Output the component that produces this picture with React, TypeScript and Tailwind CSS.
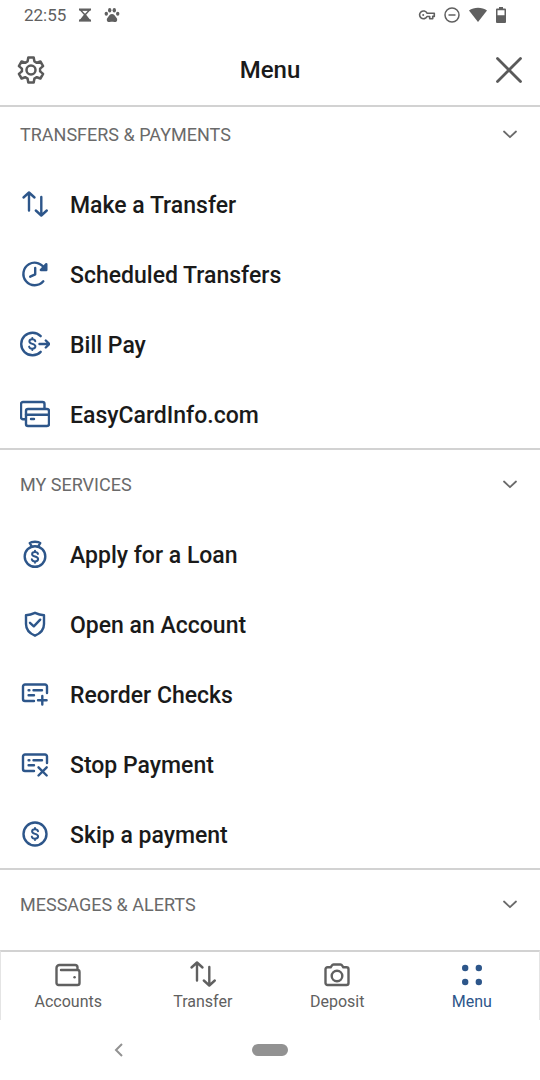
import type { ReactNode } from "react";

type IconName =
  | "transfer"
  | "scheduled"
  | "billpay"
  | "cards"
  | "loan"
  | "shield"
  | "reorder"
  | "stop"
  | "coin"
  | "wallet"
  | "camera"
  | "dots";

const checkSlip = (
  <>
    <path d="M27 13V6.500a2 2 0 0 0-2-2H5a2 2 0 0 0-2 2V19a2 2 0 0 0 2 2h9" />
    <path d="M8.600 10.300h.8M13.500 10.300H22M8.600 15.200H14" />
  </>
);

const glyphs: Record<IconName, ReactNode> = {
  transfer: (
    <>
      <path d="M9 20.500V3M3.500 7.500 9 2.500l5.500 5" />
      <path d="M21.300 7v18M15.800 20.500l5.500 5 5.500-5" />
    </>
  ),
  scheduled: (
    <>
      <path d="M23.300 21.300A11.300 11.300 0 1 1 25.200 9.800" />
      <path d="M20.800 10H26.300V4.200Z" />
      <path d="M15.200 8v6.300L10.200 16.700" />
    </>
  ),
  billpay: (
    <>
      <path d="M20.700 6.200a11.300 11.300 0 1 0 0 15.600" />
      <path d="M19.500 14H29M25.800 10.500 29.300 14l-3.500 3.500" />
      <path d="M15.300 11.200c-.3-1.200-1.400-1.900-3-1.900-1.700 0-2.900.8-2.900 2.200 0 3 6 1.700 6 4.800 0 1.500-1.200 2.400-3.100 2.400-1.700 0-2.900-.8-3.200-2.100M12.300 8v1.300M12.300 18.700V20" strokeWidth="2" />
    </>
  ),
  cards: (
    <>
      <path d="M5.500 19.300H3a2 2 0 0 1-2-2V4a2 2 0 0 1 2-2h19.500a2 2 0 0 1 2 2v4.500" />
      <rect x="6" y="9" width="23" height="17" rx="2" />
      <path d="M6 14.800h23M11 19h3" />
    </>
  ),
  loan: (
    <>
      <circle cx="15" cy="16.500" r="10.300" />
      <path d="M11.500 6 9.700 3C11.500 1.300 18.500 1.300 20.300 3l-1.800 3" />
      <path d="M18 13.900c-.3-1.200-1.400-1.900-3-1.900-1.700 0-2.900.8-2.900 2.200 0 3 6 1.700 6 4.800 0 1.500-1.200 2.400-3.100 2.400-1.700 0-2.900-.8-3.200-2.100M15 10.700V12M15 21.400v1.300" strokeWidth="2" />
    </>
  ),
  shield: (
    <>
      <path d="M15 2.800c2.800 1.300 5.800 2.200 9 2.500V14c0 5-3.500 9.400-9 11.700C9.500 23.400 6 19 6 14V5.300c3.200-.3 6.200-1.200 9-2.500Z" />
      <path d="m10 12.800 3.800 3.500 6.400-6.600" />
    </>
  ),
  reorder: (
    <>
      {checkSlip}
      <path d="M22.300 16v8.600M18 20.300h8.600" />
    </>
  ),
  stop: (
    <>
      {checkSlip}
      <path d="m18.500 17.300 8.200 8.200M26.700 17.300l-8.200 8.200" />
    </>
  ),
  coin: (
    <>
      <circle cx="15" cy="14" r="11.500" />
      <path d="M18 11.200c-.3-1.200-1.400-1.900-3-1.900-1.700 0-2.900.8-2.900 2.200 0 3 6 1.700 6 4.800 0 1.500-1.200 2.400-3.100 2.400-1.700 0-2.900-.8-3.200-2.100M15 8v1.300M15 18.700V20" strokeWidth="2" />
    </>
  ),
  wallet: (
    <>
      <path d="M8 10h16.500a2 2 0 0 1 2 2v11a2 2 0 0 1-2 2H5.500a2 2 0 0 1-2-2V8a3 3 0 0 1 3-3H22a2.500 2.500 0 0 1 2.500 2.500V10" />
      <path d="M21.500 17.300h.1" />
    </>
  ),
  camera: (
    <>
      <path d="M5.500 7.300h3.200l1.300-1.900c.3-.6.800-.9 1.500-.9h7c.7 0 1.200.3 1.500.9l1.300 1.900h3.200a2 2 0 0 1 2 2V23a2 2 0 0 1-2 2h-19a2 2 0 0 1-2-2V9.300a2 2 0 0 1 2-2Z" />
      <circle cx="15" cy="16" r="5.300" />
    </>
  ),
  dots: (
    <g fill="currentColor" stroke="none">
      <circle cx="8.200" cy="8" r="3.200" />
      <circle cx="21.800" cy="8" r="3.200" />
      <circle cx="8.200" cy="22" r="3.200" />
      <circle cx="21.800" cy="22" r="3.200" />
    </g>
  ),
};

function Icon({ name }: { name: IconName }) {
  return (
    <svg
      viewBox="0 0 30 30"
      className="size-[30px] shrink-0"
      fill="none"
      stroke="currentColor"
      strokeWidth="2.400"
      strokeLinecap="round"
      strokeLinejoin="round"
      aria-hidden="true"
    >
      {glyphs[name]}
    </svg>
  );
}

type Item = { label: string; icon: IconName };
type Section = { title: string; items: Item[] };

const sections: Section[] = [
  {
    title: "TRANSFERS & PAYMENTS",
    items: [
      { label: "Make a Transfer", icon: "transfer" },
      { label: "Scheduled Transfers", icon: "scheduled" },
      { label: "Bill Pay", icon: "billpay" },
      { label: "EasyCardInfo.com", icon: "cards" },
    ],
  },
  {
    title: "MY SERVICES",
    items: [
      { label: "Apply for a Loan", icon: "loan" },
      { label: "Open an Account", icon: "shield" },
      { label: "Reorder Checks", icon: "reorder" },
      { label: "Stop Payment", icon: "stop" },
      { label: "Skip a payment", icon: "coin" },
    ],
  },
  { title: "MESSAGES & ALERTS", items: [] },
];

const tabs: Item[] = [
  { label: "Accounts", icon: "wallet" },
  { label: "Transfer", icon: "transfer" },
  { label: "Deposit", icon: "camera" },
  { label: "Menu", icon: "dots" },
];

function StatusBar() {
  return (
    <div className="flex h-[30px] items-center justify-between pr-[34px] pl-6 text-[#606060]">
      <div className="flex items-center gap-3">
        <span className="text-[17px] leading-5">22:55</span>
        <svg viewBox="0 0 14 14" className="size-3.5" fill="none" stroke="currentColor" strokeWidth="1.500" aria-hidden="true">
          <path d="M1 1.500h12M1 12.500h12" strokeWidth="2" />
          <path d="M2.500 2 7 7l4.500-5Z" />
          <path d="M7 6.500 2.300 12.500h9.400Z" fill="currentColor" />
        </svg>
        <svg viewBox="0 0 16 16" className="size-4" fill="currentColor" aria-hidden="true">
          <ellipse cx="2.300" cy="6.800" rx="1.700" ry="2" />
          <ellipse cx="5.700" cy="3.200" rx="1.700" ry="2.300" />
          <ellipse cx="10.300" cy="3.200" rx="1.700" ry="2.300" />
          <ellipse cx="13.700" cy="6.800" rx="1.700" ry="2" />
          <path d="M8 7c2 0 2.800 1.800 4 3.200 1 1.100 1.400 2 1.100 3.200-.4 1.500-1.700 1.900-3 1.600-1.400-.3-2.800-.3-4.200 0-1.300.3-2.600-.1-3-1.600-.3-1.200.1-2.100 1.100-3.200C5.200 8.800 6 7 8 7Z" />
        </svg>
      </div>
      <div className="flex items-center gap-2">
        <svg viewBox="0 0 18 10" className="h-2.5 w-[18px]" fill="none" stroke="currentColor" strokeWidth="1.600" strokeLinejoin="round" aria-hidden="true">
          <path d="M9 3.200h7.300v3.200h-1.600v2.400h-3V6.500H9A3.900 3.900 0 1 1 9 3.200Z" />
          <circle cx="5.200" cy="5" r="1" fill="currentColor" stroke="none" />
        </svg>
        <svg viewBox="0 0 16 16" className="size-4" fill="none" stroke="currentColor" strokeWidth="1.500" aria-hidden="true">
          <circle cx="8" cy="8" r="7" />
          <path d="M4.500 8h7" />
        </svg>
        <svg viewBox="0 0 20 16" className="h-4 w-5" fill="currentColor" aria-hidden="true">
          <path d="M1 3.500C6-.3 14-.3 19 3.500L10 15Z" />
        </svg>
        <svg viewBox="0 0 10 16" className="h-4 w-2.5" fill="currentColor" aria-hidden="true">
          <path fillRule="evenodd" d="M3 0h4v1.500h2a1 1 0 0 1 1 1V15a1 1 0 0 1-1 1H1a1 1 0 0 1-1-1V2.500a1 1 0 0 1 1-1h2ZM1.500 3.200v5h7v-5Z" />
        </svg>
      </div>
    </div>
  );
}

function Header() {
  return (
    <header className="flex h-[77px] items-center justify-between border-b-2 border-[#d2d2d2] px-4 pt-1">
      <button type="button" aria-label="Settings" className="text-[#5a5a5a]">
        <svg viewBox="0 0 30 30" className="size-[30px]" fill="none" stroke="currentColor" strokeWidth="2.500" strokeLinejoin="round" aria-hidden="true">
          <path d="M12.300 2.500h5.400l.7 3.900 2.400 1.400 3.600-1.300 2.700 4.600-3 2.500v2.800l3 2.500-2.700 4.600-3.600-1.300-2.400 1.400-.7 3.900h-5.400l-.7-3.900-2.400-1.400-3.600 1.300-2.700-4.600 3-2.500v-2.800l-3-2.500 2.700-4.600 3.600 1.300 2.400-1.400Z" />
          <circle cx="15" cy="15" r="4.500" />
        </svg>
      </button>
      <h1 className="text-2xl font-medium text-[#1a1a1a]">Menu</h1>
      <button type="button" aria-label="Close" className="text-[#5a5a5a]">
        <svg viewBox="0 0 30 30" className="size-[30px]" fill="none" stroke="currentColor" strokeWidth="2.800" strokeLinecap="round" aria-hidden="true">
          <path d="M3.500 3.500 26.500 26.500M26.500 3.500 3.500 26.500" />
        </svg>
      </button>
    </header>
  );
}

function MenuSection({ title, items }: Section) {
  return (
    <section className="group">
      <h2>
        <button
          type="button"
          aria-expanded={items.length > 0}
          className="flex h-[70px] w-full items-center justify-between pr-[22px] pl-5 text-lg text-[#6a6a6a] group-first:h-[63px] group-first:pb-2"
        >
          {title}
          <svg viewBox="0 0 16 10" className="h-2.5 w-4" fill="none" stroke="currentColor" strokeWidth="1.800" strokeLinecap="round" strokeLinejoin="round" aria-hidden="true">
            <path d="m2 1.500 6 5.700 6-5.700" />
          </svg>
        </button>
      </h2>
      <ul>
        {items.map((item) => (
          <li key={item.label} className="h-[70px] border-[#d2d2d2] last:border-b-2">
            <a href="#" className="flex h-[70px] items-center gap-5 px-5 text-[#2d568a]">
              <Icon name={item.icon} />
              <span className="pt-0.5 text-[23px] leading-8 font-medium text-[#1a1a1a]">{item.label}</span>
            </a>
          </li>
        ))}
      </ul>
    </section>
  );
}

export default function App() {
  return (
    <div className="flex min-h-screen flex-col bg-white font-['Roboto',sans-serif]">
      <StatusBar />
      <Header />
      <main className="flex-1">
        {sections.map((section) => (
          <MenuSection key={section.title} {...section} />
        ))}
      </main>
      <nav className="grid grid-cols-4 border-x border-t-2 border-x-[#e4e4e4] border-t-[#d2d2d2]">
        {tabs.map((tab) => (
          <a
            key={tab.label}
            href="#"
            aria-current={tab.label === "Menu" ? "page" : undefined}
            className="flex h-[68px] flex-col items-center gap-0.5 pt-2 text-[#606060] aria-[current=page]:text-[#2d568a]"
          >
            <Icon name={tab.icon} />
            <span className="text-base leading-5">{tab.label}</span>
          </a>
        ))}
      </nav>
      <div className="grid h-[60px] grid-cols-3 items-center px-[105px] text-[#929292]">
        <button type="button" aria-label="Back" className="justify-self-start px-2">
          <svg viewBox="0 0 12 14" className="h-3.5 w-3" fill="none" stroke="currentColor" strokeWidth="2" aria-hidden="true">
            <path d="M9 1 3 7l6 6" />
          </svg>
        </button>
        <button type="button" aria-label="Home" className="h-3 w-9 justify-self-center rounded-full bg-[#929292]" />
      </div>
    </div>
  );
}
